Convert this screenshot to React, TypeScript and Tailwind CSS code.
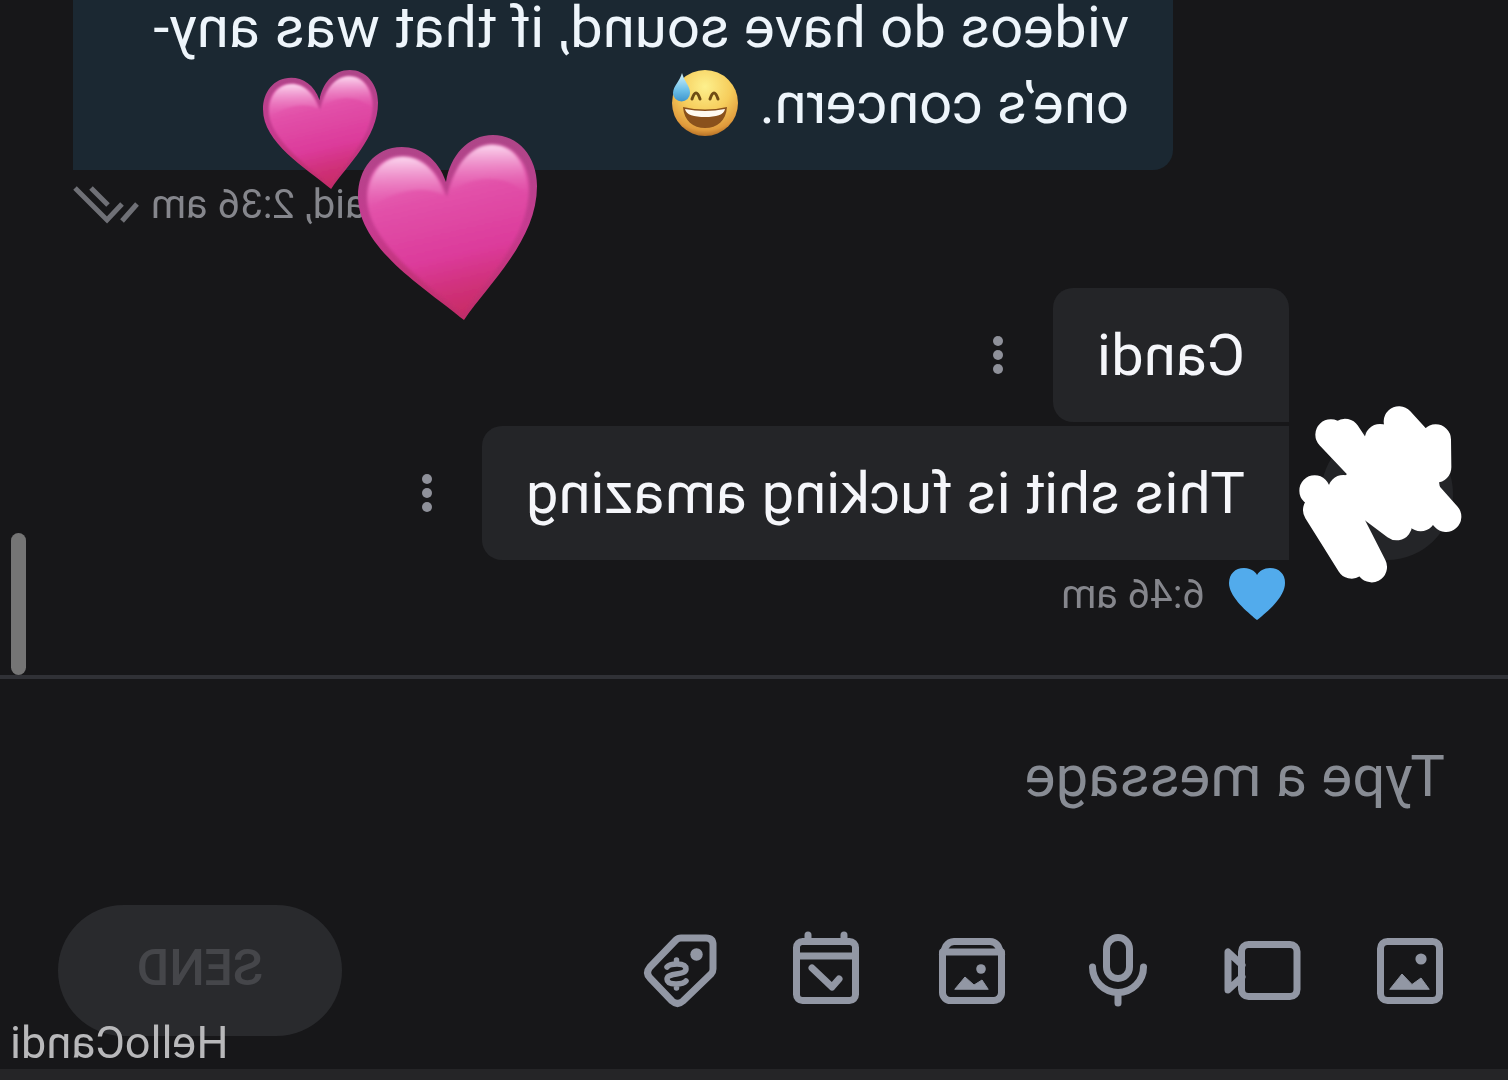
import React from "react";

const HEART =
  "M88 47C80 23 62 12 44 12C16 12 0 35 0 61C0 113 66 152 106 185C132 147 179 105 179 51C179 21 160 0 135 0C110 0 92 21 88 47Z";

const HeartSticker: React.FC<{ id: string; className: string }> = ({ id, className }) => (
  <svg viewBox="0 0 179 185" className={className} aria-hidden="true">
    <defs>
      <linearGradient id={`${id}-rim`} x1="0" y1="0" x2="0" y2="1">
        <stop offset="0" stopColor="#ad4688" />
        <stop offset="0.5" stopColor="#c63b90" />
        <stop offset="1" stopColor="#c22c68" />
      </linearGradient>
      <linearGradient id={`${id}-body`} x1="0.4" y1="0" x2="0.62" y2="1">
        <stop offset="0" stopColor="#ec74bf" />
        <stop offset="0.3" stopColor="#e251a9" />
        <stop offset="0.65" stopColor="#dc3b9b" />
        <stop offset="0.85" stopColor="#cf3079" />
        <stop offset="1" stopColor="#c82b65" />
      </linearGradient>
      <linearGradient id={`${id}-shine`} x1="0" y1="0" x2="0" y2="1">
        <stop offset="0" stopColor="#fbd6ee" />
        <stop offset="1" stopColor="#e668b6" stopOpacity="0" />
      </linearGradient>
      <filter id={`${id}-soft`} x="-20%" y="-20%" width="140%" height="140%">
        <feGaussianBlur stdDeviation="1.5" />
      </filter>
      <clipPath id={`${id}-clip`}>
        <path d={HEART} />
      </clipPath>
    </defs>
    <path d={HEART} fill={`url(#${id}-rim)`} />
    <g clipPath={`url(#${id}-clip)`}>
      <g filter={`url(#${id}-soft)`}>
        <path
          d="M89 62C80 34 63 21 45 21C22 21 9 39 9 62C9 106 66 147 105 179C130 143 171 102 171 53C171 26 154 9 134 9C112 9 94 34 89 62Z"
          fill={`url(#${id}-body)`}
        />
        <path d="M10 74C8 38 26 22 45 22C64 22 80 38 86 60C66 50 36 54 10 74Z" fill={`url(#${id}-shine)`} />
        <path d="M92 56C98 25 116 10 134 10C153 10 169 25 170 60C150 40 120 38 92 56Z" fill={`url(#${id}-shine)`} />
      </g>
    </g>
  </svg>
);

const SweatSmile: React.FC = () => (
  <svg viewBox="0 0 68 68" className="ml-1.5 inline-block size-[68px] -scale-x-100 align-[-14px]" role="img" aria-label="😅">
    <defs>
      <radialGradient id="face" cx="0.5" cy="0.25" r="0.78">
        <stop offset="0" stopColor="#fdf08d" />
        <stop offset="0.5" stopColor="#f6cd5c" />
        <stop offset="0.85" stopColor="#e09a3c" />
        <stop offset="1" stopColor="#a9641f" />
      </radialGradient>
      <linearGradient id="drop" x1="0" y1="0" x2="0" y2="1">
        <stop offset="0" stopColor="#d5f3fb" />
        <stop offset="0.6" stopColor="#6cbfe8" />
        <stop offset="1" stopColor="#3d95cc" />
      </linearGradient>
    </defs>
    <circle cx="34" cy="34" r="33" fill="url(#face)" />
    <path
      d="M21 30Q25 18 29 30M39 30Q43 18 47 30"
      fill="none"
      stroke="#6f4c14"
      strokeWidth="3"
      strokeLinecap="round"
    />
    <path d="M12 38Q34 43 56 38C55 52 46 59 34 59S13 52 12 38Z" fill="#8a511c" />
    <path d="M14 40Q34 44 54 40C53 46 45 48 34 48S15 46 14 40Z" fill="#fffaf0" />
    <path d="M11 4C9 12 2 17 2 24a8 8 0 0 0 17 0C19 17 13 12 11 4Z" fill="url(#drop)" />
  </svg>
);

const DoubleCheck: React.FC = () => (
  <svg viewBox="0 0 66 40" className="h-10 w-[66px]" fill="none" stroke="#6f7076" strokeWidth="5" aria-label="Read">
    <path d="M64 3L32 35L17 19M48 3L31 20M17 36L2 19" />
  </svg>
);

const BlueHeart: React.FC = () => (
  <svg viewBox="0 0 56 54" className="h-[54px] w-14" role="img" aria-label="Liked">
    <path
      d="M28 52C18 44 0 29 0 15C0 6 6 0 15 0C21 0 26 3 28 7C30 3 35 0 41 0C50 0 56 6 56 15C56 29 38 44 28 52Z"
      fill="#52abec"
    />
  </svg>
);

const Avatar: React.FC = () => (
  <div className="relative size-[132px] shrink-0 rounded-full bg-[#242528]">
    <svg
      viewBox="0 0 684 630"
      className="absolute -top-[38px] -left-[55px] h-[210px] w-[228px] max-w-none -scale-x-100"
      fill="none"
      stroke="#ffffff"
      strokeWidth="92"
      strokeLinecap="round"
      strokeLinejoin="round"
      aria-hidden="true"
    >
      <path d="M233 220L152 134M195 132L260 230M104 302h0M190 301h0M115 360L215 520M275 531L210 403" />
      <path d="M300 148h0M357 95L430 175M467 149L468 232M400 270L498 380M422 378h0M350 405L270 345" />
      <path
        d="M195 150L240 160L262 150L320 110L357 95L430 150L467 149L468 232L490 370L422 390L350 405L262 385L210 403L250 500L215 540L150 400L104 340L104 302L160 300L205 250Z"
        fill="#ffffff"
        strokeWidth="4"
      />
    </svg>
  </div>
);

const MoreButton: React.FC = () => (
  <button type="button" aria-label="More" className="flex w-[110px] flex-col items-center gap-1 self-center">
    <span className="size-[10px] rounded-full bg-[#8f919a]" />
    <span className="size-[10px] rounded-full bg-[#8f919a]" />
    <span className="size-[10px] rounded-full bg-[#8f919a]" />
  </button>
);

const TOOLS = [
  {
    label: "Add photo",
    art: (
      <>
        <rect x="14.5" y="14.5" width="59" height="59" rx="7" />
        <path d="M64 62L52 47L42 57.5L33 51L25 62Z" fill="currentColor" strokeWidth="1" />
        <circle cx="33" cy="32" r="5.6" fill="currentColor" stroke="none" />
      </>
    ),
  },
  {
    label: "Add video",
    art: (
      <>
        <rect x="11" y="17.5" width="55.5" height="52" rx="7" />
        <path d="M66 38L80 25V63L66 50" />
      </>
    ),
  },
  {
    label: "Record voice",
    art: (
      <>
        <rect x="32.5" y="10.5" width="23" height="41" rx="11.5" />
        <path d="M18.5 40a25.5 25.5 0 0 0 51 0M44 66V76" />
      </>
    ),
  },
  {
    label: "Add from vault",
    art: (
      <>
        <path d="M14.5 25V65.5a8 8 0 0 0 8 8H65.5a8 8 0 0 0 8-8V25Z" />
        <path d="M14.5 27L18 19Q21 14.5 26 14.5H62Q67 14.5 70 19L73.5 27" />
        <path d="M61 62L51 50L42 58L34 53L28 62Z" fill="currentColor" strokeWidth="1" />
        <circle cx="35" cy="42" r="4.8" fill="currentColor" stroke="none" />
      </>
    ),
  },
  {
    label: "Schedule",
    art: (
      <>
        <rect x="14.5" y="14.5" width="59" height="59" rx="6" />
        <path d="M14.5 29H73.5M26 8V14M62 8V14M58 41L38 60L31 52" />
      </>
    ),
  },
  {
    label: "Set price",
    art: (
      <>
        <path d="M43 11H18Q11 11 11 18V42Q11 45 13 47L41 74Q46.5 79 52 74L74 51Q79 46 74 40L48 13Q46 11 43 11Z" />
        <circle cx="27.5" cy="27.5" r="6.2" fill="currentColor" stroke="none" />
        <path
          d="M57 40C55 37.5 51 37 47 37C41 37 38 39 38 42C38 49 57 45 57 52C57 56 53 57 48 57C43 57 40 56.5 38 54M47.5 33V37M47.5 57V61"
          strokeWidth="5.5"
        />
      </>
    ),
  },
];

const bubbleText = "px-11 pt-[29px] pb-[29px] text-[58px] leading-[76px]";

export default function App() {
  return (
    <div className="relative min-h-screen overflow-hidden bg-[#171719] font-[Roboto,sans-serif]">
      {/* The whole conversation is shown flipped; the stickers lie on top unflipped */}
      <div className="flex h-screen -scale-x-100 flex-col">
        <main className="relative flex flex-1 flex-col justify-end overflow-hidden pb-[47px]">
          <div className="mr-[73px] flex flex-col items-end">
            <p className={`w-full max-w-[1100px] rounded-bl-[20px] bg-[#1b2832] text-[#eef5fb] ${bubbleText}`}>
              videos do have sound, if that was any-
              <br />
              one’s concern. <SweatSmile />
            </p>
            <div className="flex h-[68px] items-center gap-3 pt-[2px] text-[40px] text-[#85868c]">
              <span>Paid, 2:36 am</span>
              <DoubleCheck />
            </div>
          </div>

          <div className="mt-[50px] flex items-end gap-8 pl-[55px]">
            <div className="pb-[68px]">
              <Avatar />
            </div>
            <div className="flex flex-col">
              <div className="flex">
                <p className={`rounded-t-[20px] rounded-br-[20px] bg-[#242528] text-[#f5f6fa] ${bubbleText}`}>Candi</p>
                <MoreButton />
              </div>
              <div className="mt-1 flex">
                <p className={`rounded-r-[20px] bg-[#242528] text-[#f5f6fa] ${bubbleText}`}>
                  This shit is fucking amazing
                </p>
                <MoreButton />
              </div>
              <div className="flex h-[68px] items-center gap-6 pt-[2px] pl-1 text-[40px] text-[#85868c]">
                <BlueHeart />
                <span>6:46 am</span>
              </div>
            </div>
          </div>

          <div className="absolute right-[11px] bottom-0 h-[142px] w-[15px] rounded-full bg-[#757575]" />
        </main>

        <form className="border-t-4 border-[#303136] pt-[59px] pb-[33px]">
          <textarea
            aria-label="Type a message"
            placeholder="Type a message"
            className="block h-[167px] w-full resize-none bg-transparent px-[63px] text-[58px] leading-[76px] text-[#f5f6fa] outline-none placeholder:text-[#888c94]"
          />
          <div className="flex items-center justify-between pr-[58px] pl-[54px]">
            <div className="flex gap-[58px] text-[#9297a4]">
              {TOOLS.map((tool) => (
                <button key={tool.label} type="button" aria-label={tool.label}>
                  <svg
                    viewBox="0 0 88 88"
                    className="size-[88px]"
                    fill="none"
                    stroke="currentColor"
                    strokeWidth="7"
                    strokeLinecap="round"
                    strokeLinejoin="round"
                  >
                    {tool.art}
                  </svg>
                </button>
              ))}
            </div>
            <button
              type="submit"
              disabled
              className="h-[131px] w-[284px] rounded-full bg-[#292a2d] pb-1 text-[50px] font-medium text-[#45464a]"
            >
              SEND
            </button>
          </div>
        </form>
        <div className="h-[11px] bg-[#252527]" />

        <span className="absolute right-[10px] bottom-[11px] text-[45px] leading-[52px] text-[#b8b8ba]">
          HelloCandi
        </span>
      </div>

      <HeartSticker id="small" className="absolute top-[70px] left-[263px] h-[119px] w-[115px]" />
      <HeartSticker id="big" className="absolute top-[135px] left-[358px] h-[185px] w-[179px]" />
    </div>
  );
}
